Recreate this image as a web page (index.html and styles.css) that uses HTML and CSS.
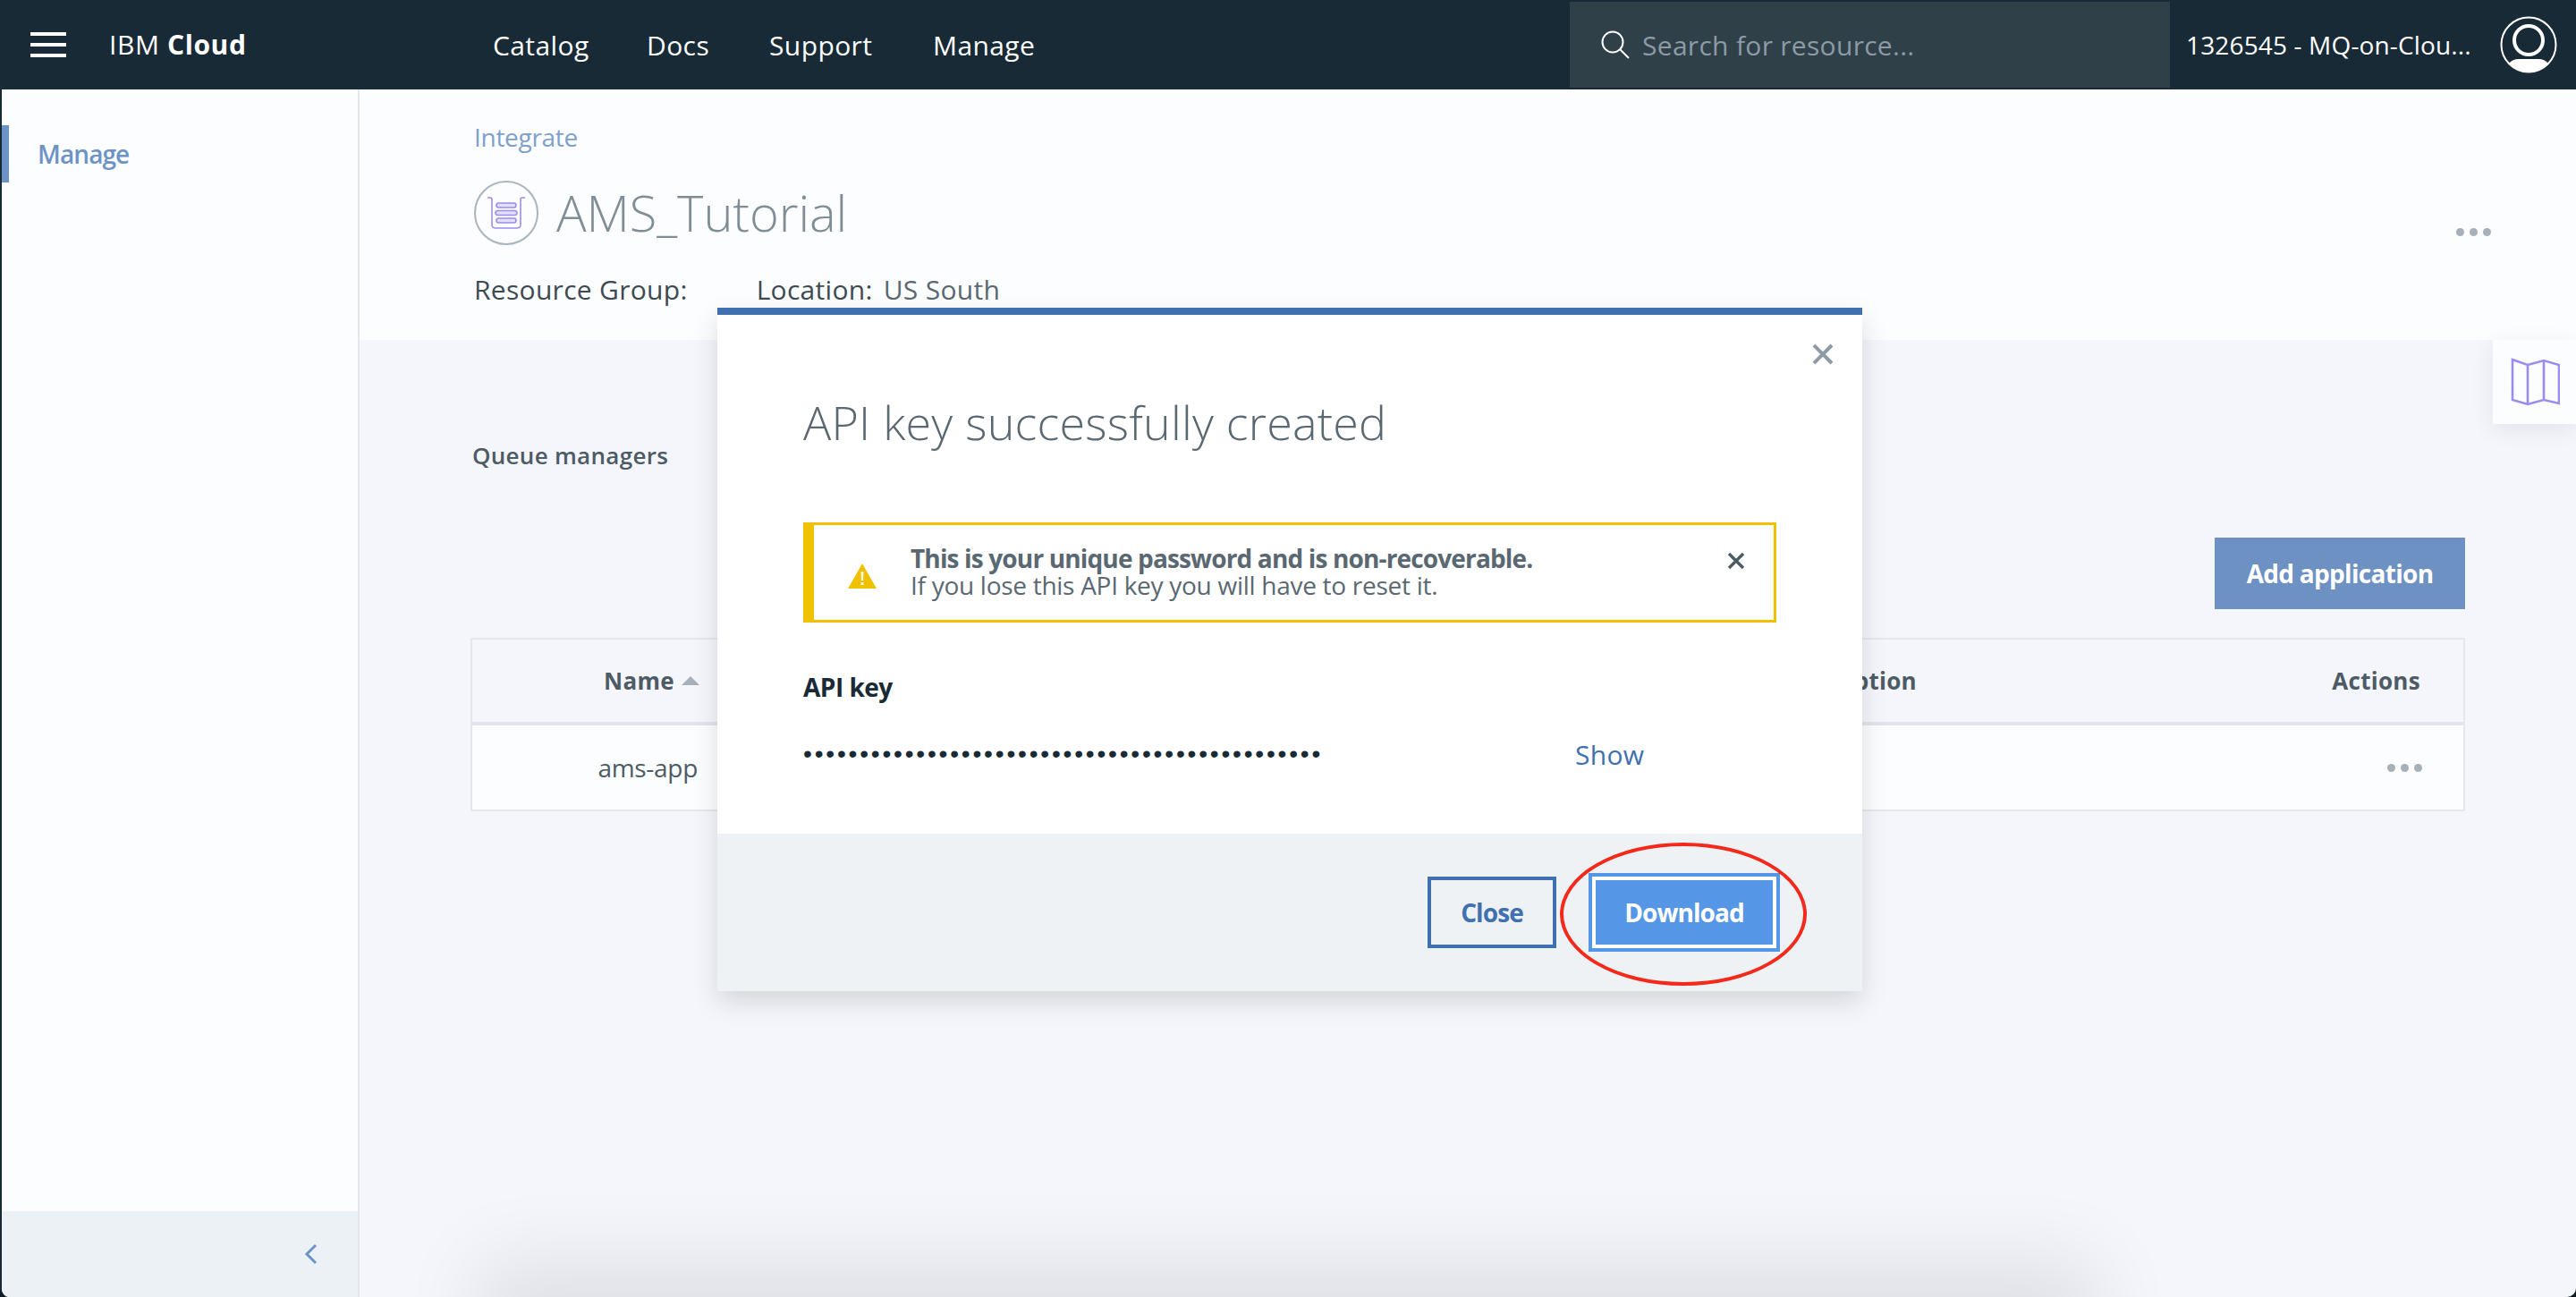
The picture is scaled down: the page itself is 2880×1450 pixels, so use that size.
FILE: index.html
```html
<!DOCTYPE html>
<html lang="en">
<head>
<meta charset="utf-8">
<title>AMS_Tutorial</title>
<link rel="stylesheet" href="styles.css">
</head>
<body>
<div class="app">
  <header class="topbar">
    <div class="burger"><span></span><span></span><span></span></div>
    <div class="brand">IBM <b>Cloud</b></div>
    <nav class="nav">
      <a>Catalog</a><a>Docs</a><a>Support</a><a>Manage</a>
    </nav>
    <div class="search">
      <svg class="search-icon" width="34" height="34" viewBox="0 0 34 34"><circle cx="14" cy="14" r="11.5" fill="none" stroke="#fff" stroke-width="2"/><path d="M22.5 22.5L32 32" stroke="#fff" stroke-width="2"/></svg>
      <span>Search for resource...</span>
    </div>
    <div class="account">1326545 - MQ-on-Clou...</div>
    <svg class="avatar" width="64" height="64" viewBox="0 0 64 64"><circle cx="32" cy="32" r="30.5" fill="none" stroke="#fff" stroke-width="2"/><circle cx="32" cy="27" r="16" fill="none" stroke="#fff" stroke-width="4"/><path d="M10 53Q14 48 21 48H43Q50 48 54 53A30 30 0 0 1 10 53Z" fill="#fff"/></svg>
  </header>
  <div class="shell">
    <aside class="sidebar">
      <div class="side-nav"><a class="side-link">Manage</a></div>
      <div class="side-foot">
        <svg width="16" height="24" viewBox="0 0 16 24"><path d="M13 2L3 12L13 22" fill="none" stroke="#6d93c6" stroke-width="3"/></svg>
      </div>
    </aside>
    <main class="main">
      <section class="page-head">
        <div class="crumb">Integrate</div>
        <div class="title-row">
          <svg class="svc-icon" width="72" height="72" viewBox="0 0 72 72"><circle cx="36" cy="36" r="35" fill="none" stroke="#a9b5bc" stroke-width="2"/><path d="M15 19H18Q20 19 20 21V49Q20 53 24 53H48Q52 53 52 49V21Q52 19 54 19H57" fill="none" stroke="#9b8cf0" stroke-width="1.6"/><g fill="#e3dffb" stroke="#9b8cf0" stroke-width="1.6"><rect x="25" y="25" width="22" height="5" rx="2.5"/><rect x="24" y="33.5" width="24" height="5" rx="2.5"/><rect x="25" y="42" width="22" height="5" rx="2.5"/></g></svg>
          <h1>AMS_Tutorial</h1>
          <div class="more"><i></i><i></i><i></i></div>
        </div>
        <div class="meta"><span class="meta-label">Resource Group:</span><span class="meta-label loc">Location:</span><span class="meta-value">US South</span></div>
      </section>
      <section class="content">
        <h2>Queue managers</h2>
        <div class="toolbar"><button class="add-btn">Add application</button></div>
        <div class="table">
          <div class="tr th">
            <div class="name-cell">Name<svg width="20" height="10" viewBox="0 0 20 10"><path d="M0 10L10 0L20 10Z" fill="#a5b0b8"/></svg></div>
            <div class="desc-cell">Description</div>
            <div class="act-cell">Actions</div>
          </div>
          <div class="tr td">
            <div class="name-cell">ams-app</div>
            <div class="desc-cell"></div>
            <div class="act-cell"><div class="more row-more"><i></i><i></i><i></i></div></div>
          </div>
        </div>
      </section>
    </main>
  </div>

  <div class="map-tab">
    <svg width="56" height="54" viewBox="0 0 56 54"><path d="M3 2L20 8L38 3L55 8V51L38 47L20 52L3 47ZM20 8V52M38 3V47" fill="none" stroke="#9b8cf0" stroke-width="2.6"/></svg>
  </div>

  <div class="under-sheet"></div>

  <div class="modal">
    <button class="modal-close"><svg width="24" height="24" viewBox="0 0 24 24"><path d="M2 2L22 22M22 2L2 22" stroke="#8d9ba4" stroke-width="4"/></svg></button>
    <div class="modal-body">
      <h3>API key successfully created</h3>
      <div class="notice">
        <svg class="warn" width="32" height="28" viewBox="0 0 32 28"><path d="M16 0L32 28H0Z" fill="#efc100"/><path d="M14.6 9H17.4L17 19H15Z M14.6 21H17.4V24H14.6Z" fill="#fff"/></svg>
        <div class="notice-text"><strong>This is your unique password and is non-recoverable.</strong><span>If you lose this API key you will have to reset it.</span></div>
        <svg class="notice-x" width="20" height="20" viewBox="0 0 20 20"><path d="M2 2L18 18M18 2L2 18" stroke="#4d5b65" stroke-width="3.4"/></svg>
      </div>
      <div class="key-label">API key</div>
      <div class="key-row"><span class="dots">••••••••••••••••••••••••••••••••••••••••••••••</span><a class="show">Show</a></div>
    </div>
    <div class="modal-foot">
      <button class="btn-close">Close</button>
      <button class="btn-dl">Download</button>
      <div class="ring"></div>
    </div>
  </div>
</div>
</body>
</html>
```

FILE: styles.css
```css
* { box-sizing: border-box; }
html, body { margin: 0; height: 100%; }
body { background: #0d1a22; font-family: "Open Sans", "Noto Sans", sans-serif; overflow: hidden; }
.app { position: relative; width: 2880px; height: 1450px; overflow: hidden; border-left: 2px solid #172a36; border-radius: 0 0 10px 10px; background: #f4f6fb; display: flex; flex-direction: column; }

.topbar { height: 100px; background: #172a36; display: flex; align-items: center; color: #fff; flex: none; }
.burger { width: 40px; margin-left: 32px; display: flex; flex-direction: column; gap: 8px; }
.burger span { height: 4px; background: #fff; }
.brand { margin-left: 48px; width: 429px; font-size: 30px; letter-spacing: 0.6px; line-height: 40px; }
.brand b { font-weight: 700; }
.nav { display: flex; width: 1204px; font-size: 30px; letter-spacing: 0.4px; }
.nav a:nth-child(1) { width: 172px; }
.nav a:nth-child(2) { width: 137px; }
.nav a:nth-child(3) { width: 183px; }
.search { width: 671px; height: 96px; background: #2f4049; display: flex; align-items: center; padding-left: 34px; gap: 13px; color: #8c9ba5; font-size: 30px; letter-spacing: 0.3px; }
.search-icon { flex: none; }
.account { margin-left: 18px; width: 338px; font-size: 28px; font-weight: 500; letter-spacing: 0.15px; white-space: nowrap; }
.avatar { flex: none; margin-left: 13px; }

.shell { flex: 1; display: flex; min-height: 0; }
.sidebar { width: 400px; flex: none; background: #fcfdff; border-right: 2px solid #e3e7ec; display: flex; flex-direction: column; justify-content: space-between; }
.side-nav { padding-top: 40px; }
.side-link { display: flex; align-items: center; height: 64px; border-left: 8px solid #6d93c6; padding-left: 32px; color: #6d93c6; font-size: 28px; font-weight: 600; letter-spacing: -0.9px; }
.side-foot { height: 96px; background: #ecf1f5; display: flex; justify-content: flex-end; align-items: center; padding-right: 44px; }

.main { flex: 1; min-width: 0; }
.page-head { height: 280px; background: #fcfdff; padding: 33px 124px 0 128px; }
.crumb { font-size: 28px; line-height: 40px; color: #7ea0cd; letter-spacing: -0.3px; }
.title-row { display: flex; align-items: center; height: 72px; margin-top: 29px; gap: 20px; position: relative; }
.title-row h1 { margin: -3px 0 0; font-size: 56px; font-weight: 300; color: #7f8e95; letter-spacing: -0.1px; line-height: 72px; }
.more { display: flex; gap: 6px; }
.more i { width: 9px; height: 9px; border-radius: 50%; background: #a5b0b8; }
.title-row .more { margin-left: auto; margin-right: -29px; margin-top: 42px; }
.meta { margin-top: 30px; font-size: 30px; line-height: 40px; color: #3d4a52; display: flex; letter-spacing: 0.3px; }
.meta-label.loc { margin-left: 77px; }
.meta-value { margin-left: 12px; color: #5a6872; }

.content { padding: 109px 124px 0 124px; }
.content h2 { margin: 0 0 0 2px; font-size: 26px; line-height: 40px; font-weight: 600; color: #4d5b65; letter-spacing: 0.3px; }
.toolbar { display: flex; justify-content: flex-end; margin-top: 72px; }
.add-btn { width: 280px; height: 80px; border: 0; background: #6c91c2; color: #fff; font: 700 28px "Open Sans", sans-serif; letter-spacing: -0.7px; }
.table { margin-top: 32px; border: 2px solid #e4e7ec; }
.tr { display: grid; grid-template-columns: 254px 1361px 1fr; align-items: center; height: 94px; color: #4d5b65; }
.th { font-size: 26px; font-weight: 700; height: 96px; border-bottom: 4px solid #e1e5e9; letter-spacing: 0.3px; }
.td { background: #fcfdff; font-size: 28px; letter-spacing: -0.3px; }
.name-cell { display: flex; justify-content: flex-end; align-items: center; gap: 8px; }
.td .name-cell { padding-right: 2px; }
.desc-cell { text-align: right; }
.act-cell { display: flex; justify-content: flex-end; padding-right: 48px; }
.row-more { margin-right: -2px; }
.row-more i { background: #a5b0b8; }

.map-tab { position: absolute; right: 0; top: 380px; width: 93px; height: 94px; background: #fcfdff; box-shadow: 0 6px 24px rgba(0,0,0,.08); display: flex; align-items: center; padding-left: 19px; }
.under-sheet { position: absolute; left: 533px; width: 1810px; top: 1450px; height: 200px; box-shadow: 0 -40px 90px rgba(0,0,0,.09); }

.modal { position: absolute; left: 800px; top: 344px; width: 1280px; height: 764px; background: #fff; border-top: 8px solid #3f70b0; box-shadow: 0 12px 28px rgba(0,0,0,.13); display: flex; flex-direction: column; }
.modal-close { position: absolute; right: 32px; top: 32px; padding: 0; border: 0; background: none; line-height: 0; }
.modal-body { flex: 1; padding: 84px 96px 0; }
.modal-body h3 { margin: 0; font-size: 52px; line-height: 72px; font-weight: 300; color: #5a6872; letter-spacing: 0.23px; }
.notice { margin-top: 76px; height: 112px; border: 3px solid #efc100; border-left-width: 12px; display: flex; align-items: center; position: relative; }
.warn { margin-left: 38px; flex: none; position: relative; top: 4px; }
.notice-text { margin-left: 38px; margin-top: -3px; display: flex; flex-direction: column; font-size: 28px; line-height: 30px; color: #5a6872; letter-spacing: -0.28px; }
.notice-text strong { font-weight: 700; letter-spacing: -0.85px; }
.notice-x { position: absolute; right: 32px; top: 30px; }
.key-label { margin-top: 52px; font-size: 28px; line-height: 40px; font-weight: 700; color: #172a36; letter-spacing: -0.5px; }
.key-row { margin-top: 35px; display: flex; align-items: center; height: 40px; }
.dots { width: 863px; font-family: "Liberation Sans", sans-serif; font-size: 28px; letter-spacing: 2.83px; color: #172a36; white-space: nowrap; }
.show { font-size: 30px; color: #3f70b0; letter-spacing: 0.3px; }
.modal-foot { height: 176px; background: #eff2f5; display: flex; align-items: center; justify-content: flex-end; padding-right: 92px; position: relative; }
.btn-close { width: 144px; height: 80px; background: transparent; border: 4px solid #3f70b0; color: #3f70b0; font: 700 28px "Open Sans", sans-serif; letter-spacing: -0.9px; }
.btn-dl { margin-left: 36px; width: 214px; height: 88px; background: #5596e6; border: 4px solid #5596e6; box-shadow: inset 0 0 0 4px #fff; color: #fff; font: 700 28px "Open Sans", sans-serif; letter-spacing: -0.9px; }
.ring { position: absolute; left: 942px; top: 10px; width: 276px; height: 160px; border: 4.5px solid #f5291a; border-radius: 50%; }
```
